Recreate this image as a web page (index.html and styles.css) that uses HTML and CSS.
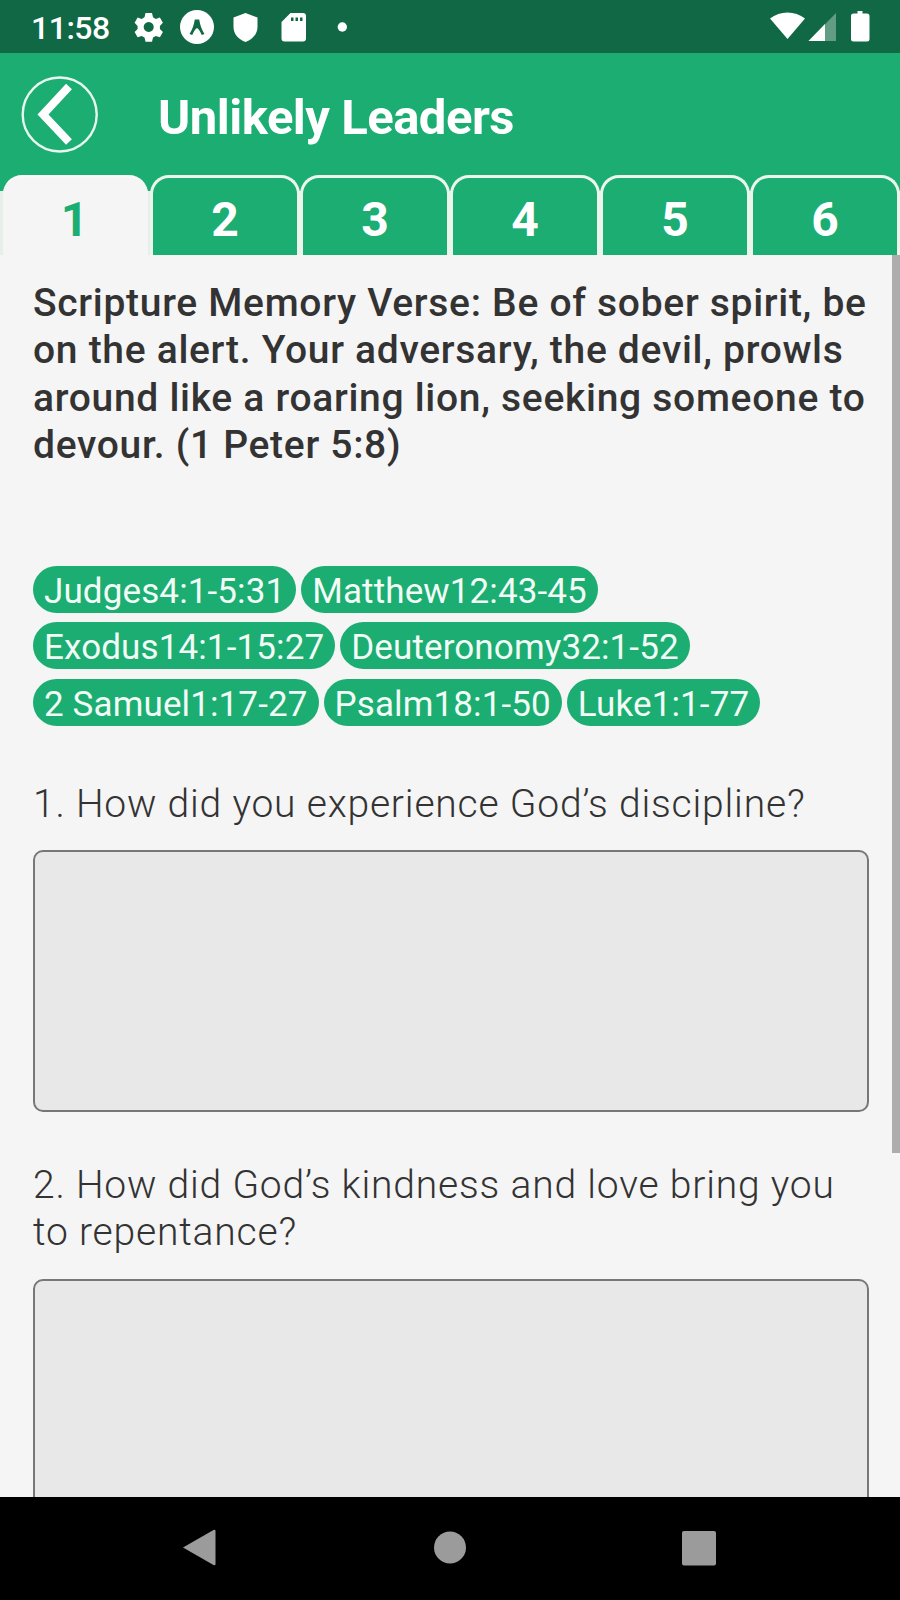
FILE: index.html
```
<!DOCTYPE html>
<html lang="en">
<head>
<meta charset="utf-8">
<title>Unlikely Leaders</title>
<link rel="stylesheet" href="styles.css">
</head>
<body>
<div class="phone">
  <div class="status">
    <span class="time">11:58</span>
    <svg class="status-left" width="230" height="53" viewBox="130 0 230 53">
      <g fill="#fff">
        <path fill-rule="evenodd" d="M145.500 13h6.500l1 4.300 2.800 1.600 4.100-1.400 3 5.200-3 3.200v3l3 3.200-3 5.200-4.100-1.400-2.800 1.600-1 4.300h-6.500l-1-4.300-2.800-1.600-4.100 1.400-3-5.200 3-3.200v-3l-3-3.200 3-5.200 4.100 1.400 2.800-1.600zM148.700 22a5 5 0 1 0 .01 0z"/>
        <circle cx="197" cy="27" r="17"/>
        <path d="M245.500 13l12 4.500v9.500c0 7-5 12.500-12 15-7-2.500-12-8-12-15v-9.500z"/>
        <path fill-rule="evenodd" d="M290.500 13h12.500a3 3 0 0 1 3 3v22.500a3 3 0 0 1-3 3h-18.500a3 3 0 0 1-3-3v-16.500zM291 17.500v3.500h2.500v-3.500zM295.500 17.500v3.500h2.500v-3.500zM300 17.500v3.500h2.500v-3.500z"/>
        <circle cx="342.300" cy="27" r="4.700"/>
      </g>
      <path d="M189.500 34c3-4.500 4.500-9.500 5.300-14.500h4.400c.8 5 2.300 10 5.300 14.500l-2.800 1c-1.500-3.500-3-6-4.700-7-1.700 1-3.200 3.500-4.700 7z" fill="#106844"/>
    </svg>
    <svg class="status-right" width="140" height="53" viewBox="760 0 140 53">
      <path d="M770 18.500c10-8 25-8 35 0l-17.500 20.500z" fill="#fff"/>
      <path d="M836 13v28h-27.500z" fill="#fff" opacity=".35"/>
      <path d="M825 24v17h-16.500z" fill="#fff"/>
      <path d="M856 13.500h1.500v-2.500h5v2.500h4.500a2.500 2.500 0 0 1 2.500 2.500v23a2.500 2.500 0 0 1-2.500 2.500h-13.500a2.500 2.500 0 0 1-2.500-2.500v-23a2.500 2.500 0 0 1 2.500-2.500z" fill="#fff"/>
    </svg>
  </div>
  <header class="header">
    <svg class="back" width="80" height="80" viewBox="20 74 80 80">
      <circle cx="59.700" cy="114.500" r="37" fill="none" stroke="#e8f8ef" stroke-width="2.400"/>
      <path d="M69 86.500L43 114.500L69 142" fill="none" stroke="#fff" stroke-width="8"/>
    </svg>
    <h1 class="title">Unlikely Leaders</h1>
  </header>
  <nav class="tabs">
    <a class="tab active">1</a><a class="tab">2</a><a class="tab">3</a><a class="tab">4</a><a class="tab">5</a><a class="tab">6</a>
  </nav>
  <main class="content">
    <p class="verse">Scripture Memory Verse: Be of sober spirit, be<br>on the alert. Your adversary, the devil, prowls<br>around like a roaring lion, seeking someone to<br>devour. (1 Peter 5:8)</p>
    <div class="chips">
      <div class="row"><span class="chip">Judges4:1-5:31</span><span class="chip">Matthew12:43-45</span></div>
      <div class="row"><span class="chip">Exodus14:1-15:27</span><span class="chip">Deuteronomy32:1-52</span></div>
      <div class="row"><span class="chip">2 Samuel1:17-27</span><span class="chip">Psalm18:1-50</span><span class="chip">Luke1:1-77</span></div>
    </div>
    <p class="question first">1. How did you experience God’s discipline?</p>
    <div class="answer"></div>
    <p class="question second">2. How did God’s kindness and love bring you<br>to repentance?</p>
    <div class="answer"></div>
    <div class="scrollbar"></div>
  </main>
  <footer class="navbar">
    <svg width="900" height="103" viewBox="0 1497 900 103" fill="#9b9b9b">
      <path d="M183 1547.500L213.500 1530q2-1 2 1v33q0 2-2 1z"/>
      <circle cx="450" cy="1547.500" r="16"/>
      <rect x="682" y="1531" width="34" height="34.500" rx="2"/>
    </svg>
  </footer>
</div>
</body>
</html>
```
FILE: styles.css
```
* { box-sizing: border-box; }
body { margin: 0; font-family: Roboto, "Liberation Sans", sans-serif; }
p, h1 { margin: 0; }
svg { display: block; flex: none; }
.phone { width: 900px; height: 1600px; display: flex; flex-direction: column; overflow: hidden; background: #f5f5f5; }
.status { height: 53px; flex: none; display: flex; background: #106844; }
.time { width: 130px; padding-left: 31px; font-size: 32px; font-weight: 500; line-height: 56px; letter-spacing: -0.500px; color: #fff; }
.status-right { margin-left: auto; }
.header { height: 122px; flex: none; display: flex; background: #1bad72; padding: 21px 0 0 20px; }
.title { margin-left: 58px; font-size: 49px; font-weight: 700; line-height: 88px; letter-spacing: -0.5px; color: #fff; white-space: nowrap; }
.tabs { height: 80px; flex: none; display: flex; background: linear-gradient(#1bad72 0 16px, #e6efe8 16px); }
.tab { flex: 1; height: 80px; border: 3px solid #ecf5ec; border-width: 3px 3.500px 0; border-radius: 19px 19px 0 0; background: #1bad72; color: #fff; font-size: 48px; font-weight: 700; line-height: 83px; text-align: center; }
.tab.active { flex: none; width: 145px; margin: 0 2px 0 3px; border-width: 3px 0 0; background: #f5f5f5; border-color: #f8f8f8; color: #1bad72; text-indent: -2px; }
.content { position: relative; flex: 1; min-height: 0; padding: 25px 31px 0 33px; overflow: hidden; color: #333; }
.verse { height: 285.500px; font-size: 39px; font-weight: 500; line-height: 47.400px; letter-spacing: 0.700px; white-space: nowrap; }
.chips { display: flex; flex-direction: column; gap: 9.500px; }
.row { display: flex; gap: 5px; }
.chip { height: 47px; padding: 0 11px; border-radius: 24px; background: #1bad72; color: #f2fbf5; font-size: 35px; line-height: 52px; letter-spacing: 0.120px; white-space: nowrap; }
.question { font-size: 39px; font-weight: 300; line-height: 47.500px; letter-spacing: 0.810px; white-space: nowrap; }
.question.first { height: 124px; padding-top: 55px; }
.question.second { height: 167px; padding-top: 50px; }
.answer { height: 262px; border: 2px solid #777; border-radius: 10px; background: #e8e8e8; }
.scrollbar { position: absolute; right: 0; top: 0; width: 8px; height: 898px; background: #adadad; }
.navbar { height: 103px; flex: none; background: #000; }
```
